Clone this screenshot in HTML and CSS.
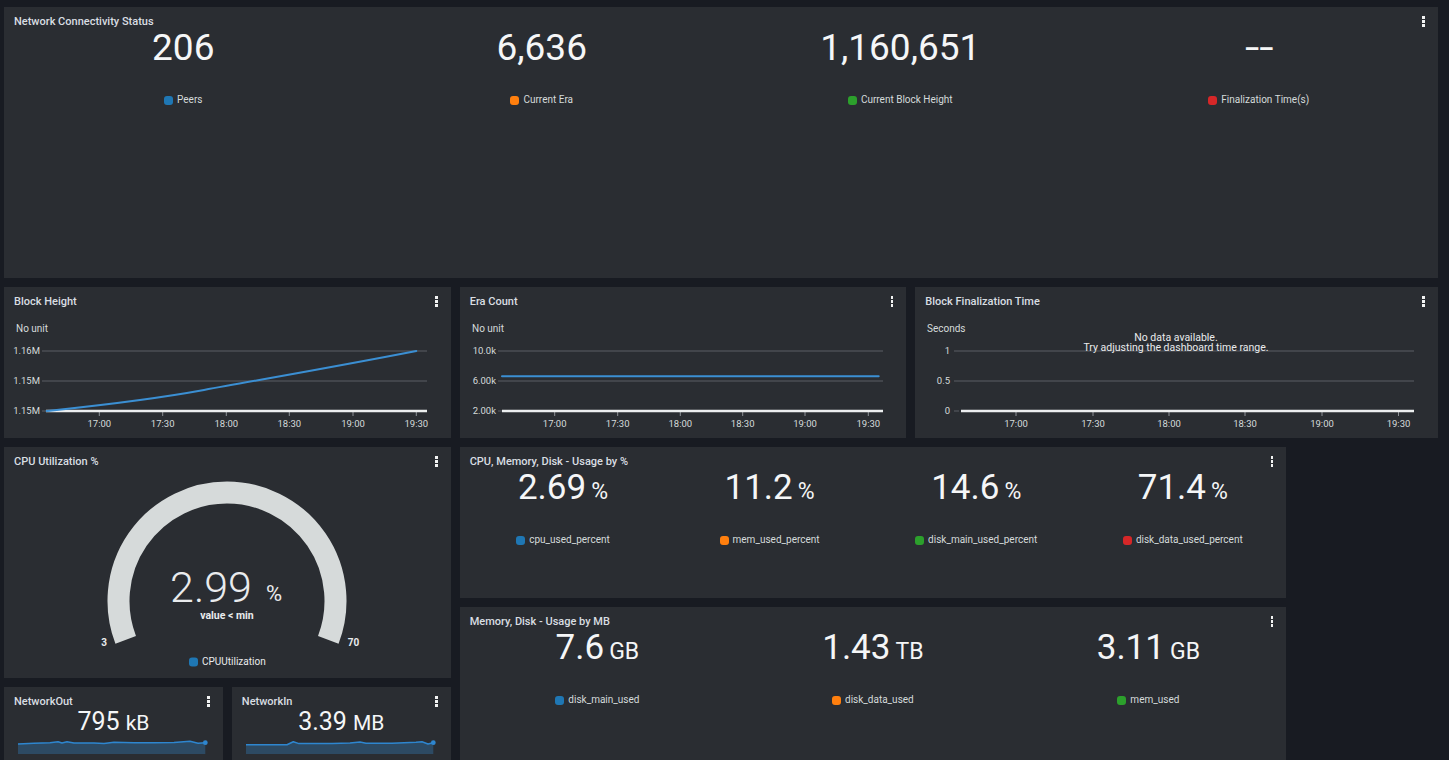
FILE: index.html
```html
<!DOCTYPE html>
<html lang="en">
<head>
<meta charset="utf-8">
<title>Dashboard</title>
<link rel="stylesheet" href="styles.css">
</head>
<body>
<div class="dash">

  <section class="panel a-top">
    <header class="ph"><span class="pt">Network Connectivity Status</span><span class="kebab"><i></i><i></i><i></i></span></header>
    <div class="stats c4">
      <div class="stat"><div class="val">206</div><div class="leg"><i class="sw blue"></i>Peers</div></div>
      <div class="stat"><div class="val">6,636</div><div class="leg"><i class="sw orange"></i>Current Era</div></div>
      <div class="stat"><div class="val">1,160,651</div><div class="leg"><i class="sw green"></i>Current Block Height</div></div>
      <div class="stat"><div class="val"><span class="wide">--</span></div><div class="leg"><i class="sw red"></i>Finalization Time(s)</div></div>
    </div>
  </section>

  <section class="panel a-bh">
    <header class="ph tall"><span class="pt">Block Height</span><span class="kebab"><i></i><i></i><i></i></span></header>
    <svg class="chart" viewBox="0 0 447 123" width="447" height="123">
      <text class="unit" x="12" y="14">No unit</text>
      <line class="grid" x1="38" y1="36" x2="423" y2="36"/>
      <line class="grid" x1="38" y1="66" x2="423" y2="66"/>
      <line class="grid" x1="38" y1="96" x2="42" y2="96"/>
      <text class="yl" x="36" y="36">1.16M</text>
      <text class="yl" x="36" y="66">1.15M</text>
      <text class="yl" x="36" y="96">1.15M</text>
      <g class="ticks">
        <line x1="95.3" y1="97" x2="95.3" y2="101"/><line x1="158.7" y1="97" x2="158.7" y2="101"/><line x1="222.3" y1="97" x2="222.3" y2="101"/><line x1="285.3" y1="97" x2="285.3" y2="101"/><line x1="349" y1="97" x2="349" y2="101"/><line x1="412.3" y1="97" x2="412.3" y2="101"/>
      </g>
      <g class="xl">
        <text x="95.3" y="109">17:00</text><text x="158.7" y="109">17:30</text><text x="222.3" y="109">18:00</text><text x="285.3" y="109">18:30</text><text x="349" y="109">19:00</text><text x="412.3" y="109">19:30</text>
      </g>
      <line class="axis" x1="42" y1="96" x2="423" y2="96"/>
      <path class="series" d="M42.7,96 C90,91 140,86 200,75 S330,52 412.3,36"/>
    </svg>
  </section>

  <section class="panel a-era">
    <header class="ph tall"><span class="pt">Era Count</span><span class="kebab"><i></i><i></i><i></i></span></header>
    <svg class="chart" viewBox="0 0 447 123" width="447" height="123">
      <text class="unit" x="12" y="14">No unit</text>
      <line class="grid" x1="38" y1="36" x2="423" y2="36"/>
      <line class="grid" x1="38" y1="66" x2="423" y2="66"/>
      <line class="grid" x1="38" y1="96" x2="42" y2="96"/>
      <text class="yl" x="36" y="36">10.0k</text>
      <text class="yl" x="36" y="66">6.00k</text>
      <text class="yl" x="36" y="96">2.00k</text>
      <g class="ticks">
        <line x1="94.7" y1="97" x2="94.7" y2="101"/><line x1="157.7" y1="97" x2="157.7" y2="101"/><line x1="220.3" y1="97" x2="220.3" y2="101"/><line x1="282.7" y1="97" x2="282.7" y2="101"/><line x1="345" y1="97" x2="345" y2="101"/><line x1="408.3" y1="97" x2="408.3" y2="101"/>
      </g>
      <g class="xl">
        <text x="94.7" y="109">17:00</text><text x="157.7" y="109">17:30</text><text x="220.3" y="109">18:00</text><text x="282.7" y="109">18:30</text><text x="345" y="109">19:00</text><text x="408.3" y="109">19:30</text>
      </g>
      <line class="axis" x1="42" y1="96" x2="423" y2="96"/>
      <line class="series" x1="42" y1="61.3" x2="418.7" y2="61.3"/>
    </svg>
  </section>

  <section class="panel a-fin">
    <header class="ph tall"><span class="pt">Block Finalization Time</span><span class="kebab"><i></i><i></i><i></i></span></header>
    <svg class="chart" viewBox="0 0 523 123" width="523" height="123">
      <text class="unit" x="12" y="14">Seconds</text>
      <line class="grid" x1="39" y1="36" x2="499" y2="36"/>
      <line class="grid" x1="39" y1="66" x2="499" y2="66"/>
      <line class="grid" x1="39" y1="96" x2="44" y2="96"/>
      <text class="yl" x="35" y="36">1</text>
      <text class="yl" x="35" y="66">0.5</text>
      <text class="yl" x="35" y="96">0</text>
      <g class="ticks">
        <line x1="101" y1="97" x2="101" y2="101"/><line x1="178" y1="97" x2="178" y2="101"/><line x1="254" y1="97" x2="254" y2="101"/><line x1="330" y1="97" x2="330" y2="101"/><line x1="407" y1="97" x2="407" y2="101"/><line x1="483.5" y1="97" x2="483.5" y2="101"/>
      </g>
      <g class="xl">
        <text x="101" y="109">17:00</text><text x="178" y="109">17:30</text><text x="254" y="109">18:00</text><text x="330" y="109">18:30</text><text x="407" y="109">19:00</text><text x="483.5" y="109">19:30</text>
      </g>
      <line class="axis" x1="46" y1="96" x2="499" y2="96"/>
      <text class="nodata" x="261" y="23.5">No data available.</text>
      <text class="nodata" x="261" y="33.5">Try adjusting the dashboard time range.</text>
    </svg>
  </section>

  <section class="panel a-cpu">
    <header class="ph tall"><span class="pt">CPU Utilization %</span><span class="kebab"><i></i><i></i><i></i></span></header>
    <svg class="gauge" viewBox="0 0 447 203" width="447" height="203">
      <path class="arc" d="M121.7,164.9 A108.5,108.5 0 1 1 324.3,164.9"/>
      <text class="gv" x="207" y="126.5">2.99</text>
      <text class="gu" x="262" y="126">%</text>
      <text class="gs" x="223" y="141">value &lt; min</text>
      <text class="gm" x="100" y="168">3</text>
      <text class="gm" x="349.5" y="168">70</text>
      <rect x="185" y="182.5" width="9" height="9" rx="3" fill="#1f77b4"/>
      <text class="gl" x="198" y="187.5">CPUUtilization</text>
    </svg>
  </section>

  <section class="panel a-pct">
    <header class="ph"><span class="pt">CPU, Memory, Disk - Usage by %</span><span class="kebab"><i></i><i></i><i></i></span></header>
    <div class="stats c4 mid">
      <div class="stat"><div class="val">2.69<span class="u">%</span></div><div class="leg"><i class="sw blue"></i>cpu_used_percent</div></div>
      <div class="stat"><div class="val">11.2<span class="u">%</span></div><div class="leg"><i class="sw orange"></i>mem_used_percent</div></div>
      <div class="stat"><div class="val">14.6<span class="u">%</span></div><div class="leg"><i class="sw green"></i>disk_main_used_percent</div></div>
      <div class="stat"><div class="val">71.4<span class="u">%</span></div><div class="leg"><i class="sw red"></i>disk_data_used_percent</div></div>
    </div>
  </section>

  <section class="panel a-mb">
    <header class="ph"><span class="pt">Memory, Disk - Usage by MB</span><span class="kebab"><i></i><i></i><i></i></span></header>
    <div class="stats c3 mid">
      <div class="stat"><div class="val">7.6<span class="u">GB</span></div><div class="leg"><i class="sw blue"></i>disk_main_used</div></div>
      <div class="stat"><div class="val">1.43<span class="u">TB</span></div><div class="leg"><i class="sw orange"></i>disk_data_used</div></div>
      <div class="stat"><div class="val">3.11<span class="u">GB</span></div><div class="leg"><i class="sw green"></i>mem_used</div></div>
    </div>
  </section>

  <section class="panel a-out">
    <header class="ph"><span class="pt">NetworkOut</span><span class="kebab"><i></i><i></i><i></i></span></header>
    <div class="sval">795<span class="su">kB</span></div>
    <svg class="spark" viewBox="0 0 219 24" width="219" height="24">
      <path class="sfill" d="M14,9 L30,8.3 46,7.7 54,6.7 58,8 63,6.8 70,8 90,8 100,8.6 110,7.2 130,7.8 150,7.8 170,7.4 186,6.3 194,8.3 201.3,7.7 L201.3,19 L14,19 Z"/>
      <polyline class="sline" points="14,9 30,8.3 46,7.7 54,6.7 58,8 63,6.8 70,8 90,8 100,8.6 110,7.2 130,7.8 150,7.8 170,7.4 186,6.3 194,8.3 201.3,7.7"/>
      <circle cx="201.3" cy="7.7" r="2.4" fill="#2e86cf"/>
    </svg>
  </section>

  <section class="panel a-in">
    <header class="ph"><span class="pt">NetworkIn</span><span class="kebab"><i></i><i></i><i></i></span></header>
    <div class="sval">3.39<span class="su">MB</span></div>
    <svg class="spark" viewBox="0 0 219 24" width="219" height="24">
      <path class="sfill" d="M14,9.7 L55,9.7 61.3,6.7 67,8.6 100,8.6 118,8 128,7 134,8.2 160,8.2 184,7.3 190,6.7 196,9 201.3,7.7 L201.3,19 L14,19 Z"/>
      <polyline class="sline" points="14,9.7 55,9.7 61.3,6.7 67,8.6 100,8.6 118,8 128,7 134,8.2 160,8.2 184,7.3 190,6.7 196,9 201.3,7.7"/>
      <circle cx="201.3" cy="7.7" r="2.4" fill="#2e86cf"/>
    </svg>
  </section>

</div>
</body>
</html>
```

FILE: styles.css
```css
html, body {
  margin: 0;
  height: 760px;
  overflow: hidden;
  background: #181b22;
}
body {
  font-family: Roboto, "Liberation Sans", sans-serif;
  color: #d5dbdb;
}
.dash {
  display: grid;
  grid-template-columns: repeat(19, 1fr);
  grid-auto-rows: 31px;
  gap: 9px;
  width: 1434px;
  padding: 7px 0 0 4px;
}
.panel {
  background: #2a2d32;
  display: flex;
  flex-direction: column;
  min-width: 0;
  overflow: hidden;
}
.a-top { grid-column: 1 / 20; grid-row: 1 / 8; }
.a-bh  { grid-column: 1 / 7;  grid-row: 8 / 12; }
.a-era { grid-column: 7 / 13; grid-row: 8 / 12; }
.a-fin { grid-column: 13 / 20; grid-row: 8 / 12; }
.a-cpu { grid-column: 1 / 7;  grid-row: 12 / 18; }
.a-pct { grid-column: 7 / 18; grid-row: 12 / 16; }
.a-mb  { grid-column: 7 / 18; grid-row: 16 / 22; }
.a-out { grid-column: 1 / 4;  grid-row: 18 / 22; }
.a-in  { grid-column: 4 / 7;  grid-row: 18 / 22; }

.ph {
  display: flex;
  justify-content: space-between;
  align-items: flex-start;
  height: 22px;
  padding: 8px 13px 0 10px;
  box-sizing: border-box;
  flex: none;
}
.ph.tall { height: 28px; }
.pt {
  font-size: 11px;
  line-height: 14px;
  font-weight: 500;
  color: #d9dee2;
  white-space: nowrap;
}
.kebab {
  display: flex;
  flex-direction: column;
  gap: 1.5px;
  margin-top: 1px;
}
.kebab i {
  display: block;
  width: 2.5px;
  height: 2.5px;
  background: #f2f3f3;
}

.stats {
  display: grid;
}
.stats.c4 { grid-template-columns: repeat(4, 1fr); }
.stats.c3 { grid-template-columns: repeat(3, 1fr); }
.stat {
  display: flex;
  flex-direction: column;
  align-items: center;
}
.val {
  font-size: 37px;
  line-height: 38px;
  height: 38px;
  color: #f5f6f7;
  font-weight: 400;
  white-space: nowrap;
}
.wide {
  display: inline-block;
  transform: scaleX(1.4);
}
.mid .val { font-size: 35px; }
.u {
  font-size: 23px;
  margin-left: 5px;
}
.leg {
  margin-top: 26px;
  display: flex;
  align-items: center;
  font-size: 10px;
  line-height: 14px;
  color: #d5dbdb;
  white-space: nowrap;
}
.sw {
  display: block;
  width: 9px;
  height: 9px;
  border-radius: 3px;
  margin-right: 4px;
}
.blue { background: #1f77b4; }
.orange { background: #ff7f0e; }
.green { background: #2ca02c; }
.red { background: #d62728; }

.chart, .gauge, .spark {
  display: block;
  flex: none;
}
.chart text {
  font-size: 9.5px;
  fill: #d5dbdb;
  dominant-baseline: middle;
}
.chart .unit { font-size: 10px; }
.chart .yl { text-anchor: end; }
.chart .xl text { text-anchor: middle; }
.chart .nodata { text-anchor: middle; font-size: 10.5px; fill: #e9ebed; }
.grid { stroke: #5b5f64; stroke-width: 1; }
.ticks line { stroke: #8d9196; stroke-width: 1; }
.axis { stroke: #eceeef; stroke-width: 2.5; }
.series { fill: none; stroke: #3b8fd3; stroke-width: 2; stroke-linejoin: round; stroke-linecap: round; }

.arc { fill: none; stroke: #d6dada; stroke-width: 22; }
.gauge text { fill: #e9ebed; }
.gv { font-size: 43px; text-anchor: middle; font-weight: 300; }
.gu { font-size: 22px; }
.gs { font-size: 10.5px; font-weight: 700; text-anchor: middle; dominant-baseline: middle; }
.gm { font-size: 10px; font-weight: 700; text-anchor: middle; dominant-baseline: middle; }
.gl { font-size: 10px; dominant-baseline: middle; }

.sval {
  text-align: center;
  font-size: 25px;
  line-height: 26px;
  height: 26px;
  color: #f5f6f7;
  white-space: nowrap;
}
.su {
  font-size: 21px;
  margin-left: 6px;
}
.sfill { fill: #2d4a63; }
.sline { fill: none; stroke: #2e86cf; stroke-width: 1.5; stroke-linejoin: round; }
```
